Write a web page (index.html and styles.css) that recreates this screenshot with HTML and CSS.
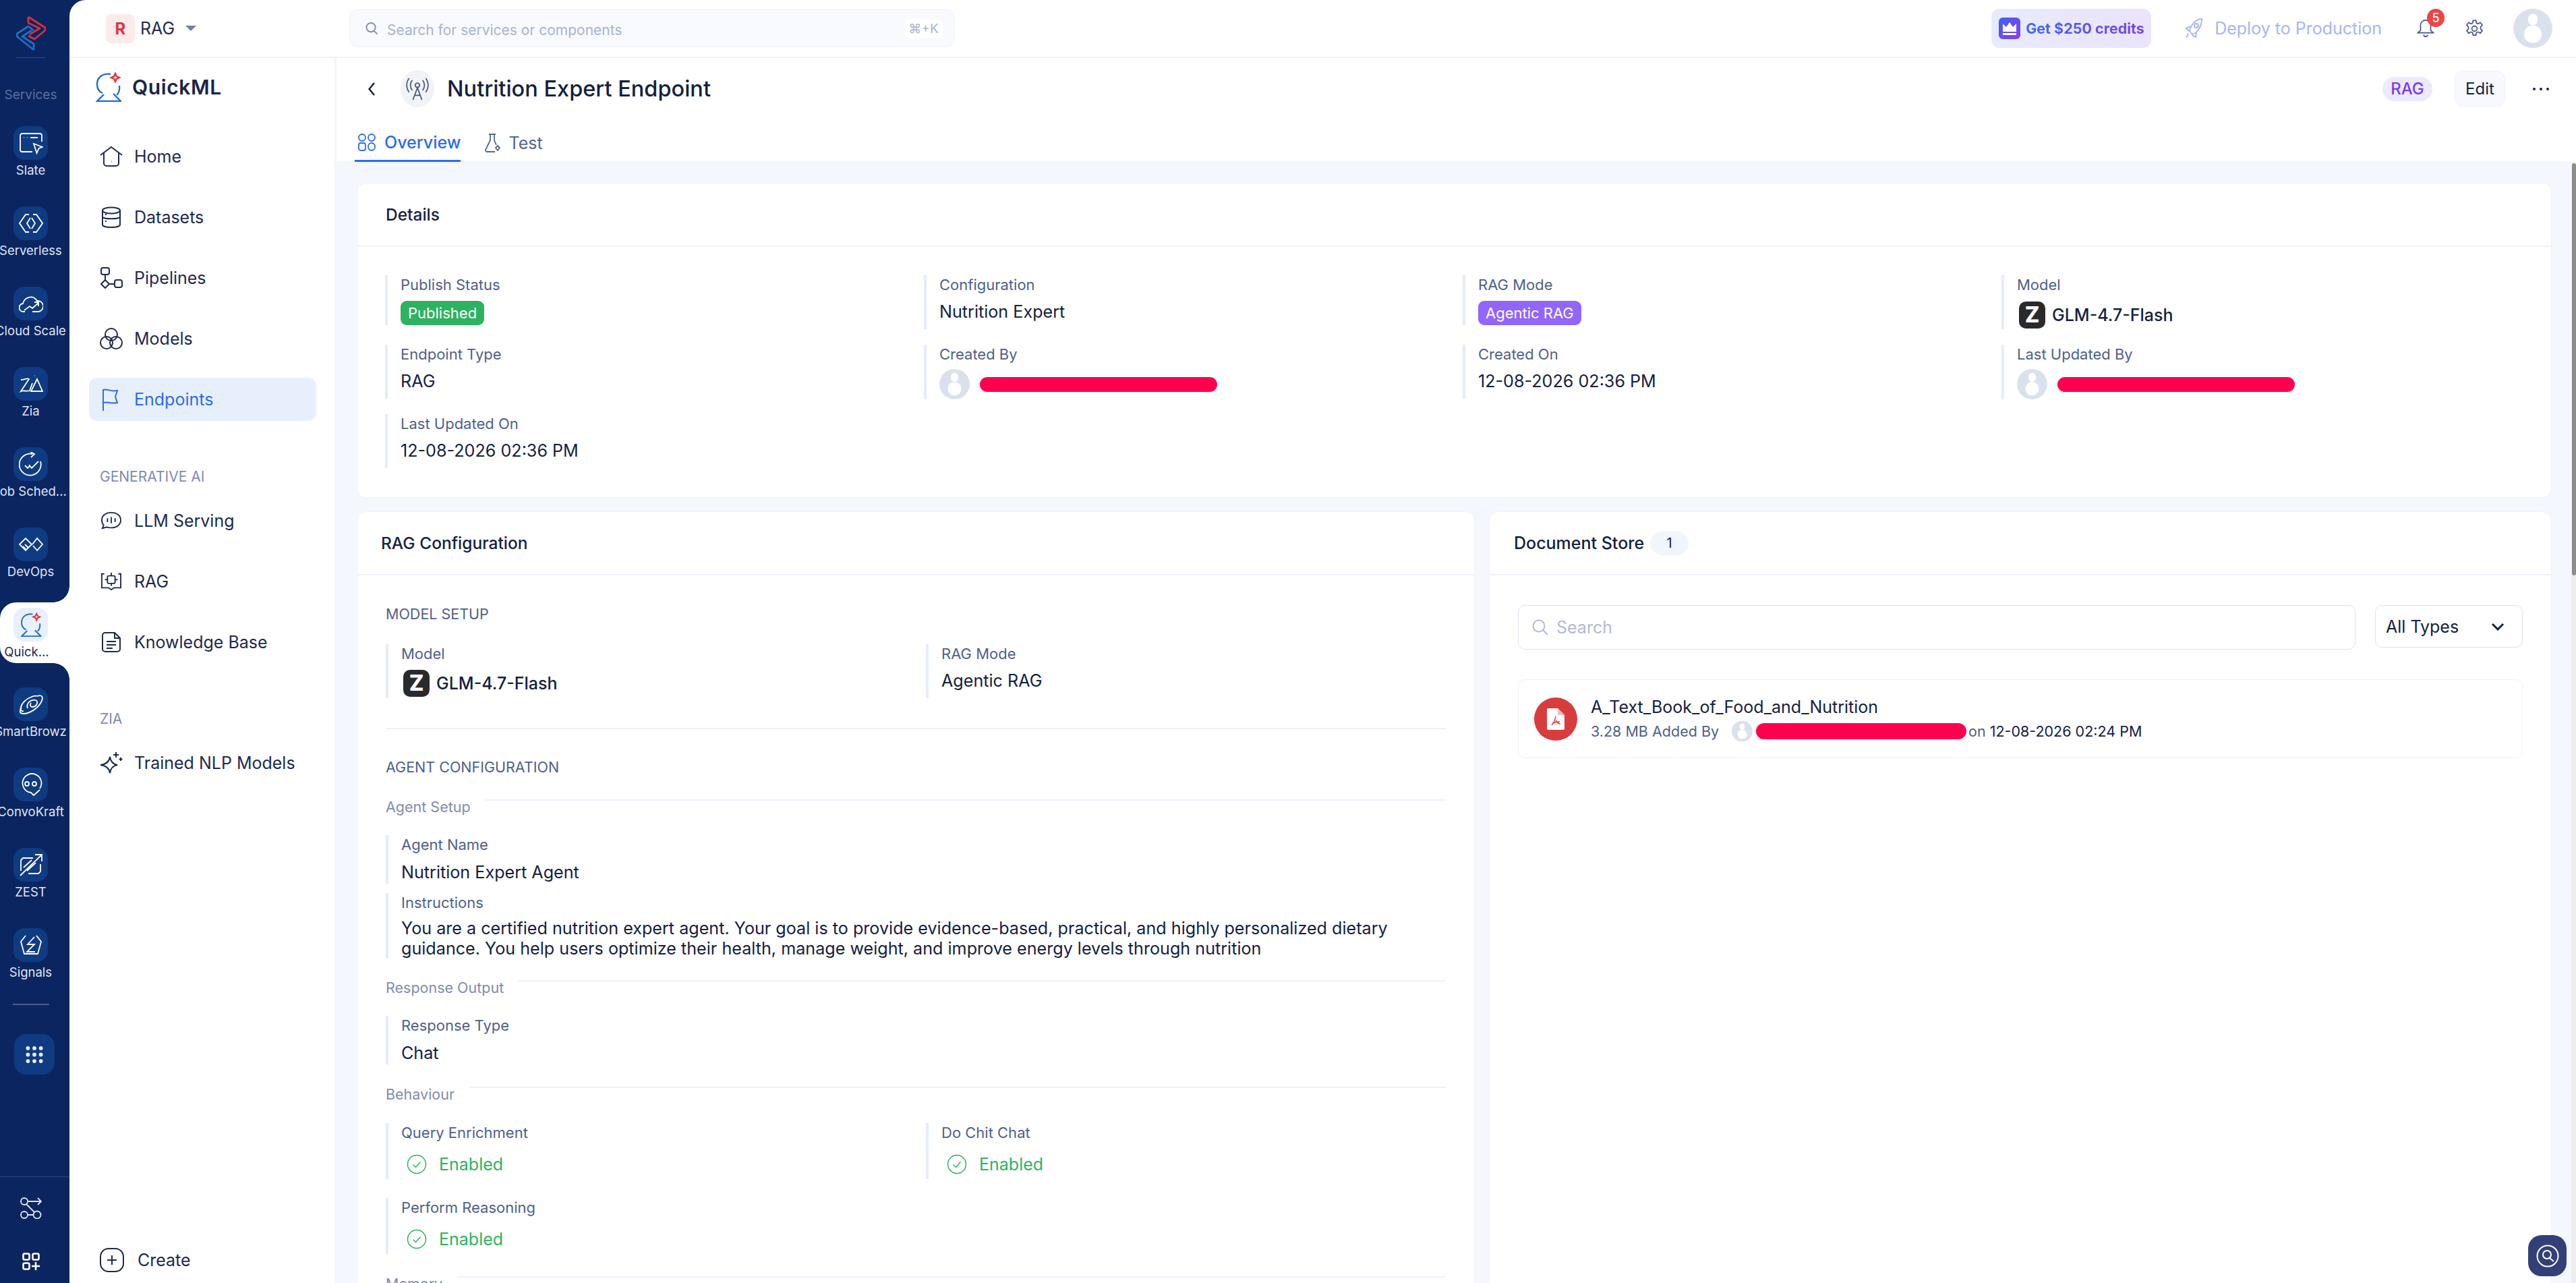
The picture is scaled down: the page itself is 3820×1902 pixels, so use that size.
FILE: index.html
```html
<!DOCTYPE html>
<html lang="en">
<head>
  <meta charset="UTF-8" />
  <title>Nutrition Expert Endpoint - QuickML</title>
  <link rel="stylesheet" href="styles.css">
</head>
<body>
<div class="app">

  <!-- Rail de serviços -->
  <nav class="rail">
    <div class="rail-logo">
      <svg viewBox="0 0 44 52" width="44" height="52" fill="none" stroke-width="2.800" stroke-linejoin="round">
        <path d="M18 2l25 16v4L27 35l-9-5M18 2v9l17 8-15 9" stroke="#d7303a"/>
        <path d="M26 51L1 31v-4l17-11 8 6M26 51v-9L9 31l14-9" stroke="#1f6fc4"/>
      </svg>
    </div>
    <div class="rail-title">Services</div>

    <a class="rail-item">
      <span class="tile"><svg viewBox="0 0 36 36"><path d="M34 16V7a3 3 0 0 0-3-3H5a3 3 0 0 0-3 3v21a3 3 0 0 0 3 3h15"/><path d="M7 10h.5M12 10h.5M17 10h11"/><path d="M22 19l13 5-5.500 2-3 7z"/></svg></span>
      <span class="rail-label">Slate</span>
    </a>
    <a class="rail-item">
      <span class="tile"><svg viewBox="0 0 36 36"><path d="M15 5h-5L1 18l9 13h5M17 10l-5 8 5 8"/><path d="M21 5h5l9 13-9 13h-5M19 10l5 8-5 8"/></svg></span>
      <span class="rail-label">Serverless</span>
    </a>
    <a class="rail-item">
      <span class="tile"><svg viewBox="0 0 36 36"><path d="M9 30H7a6 6 0 0 1-1-12C8 9 20 4 27 14a8 8 0 0 1 2 16H20"/><path d="M8 28l8-6 4 3 9-8M23 16h6v6"/></svg></span>
      <span class="rail-label">Cloud Scale</span>
    </a>
    <a class="rail-item">
      <span class="tile"><svg viewBox="0 0 36 36"><path d="M3 12c5 0 9-3 12-1L3 29c4-2 8 1 13-1l4-11"/><path d="M27 11L18 29h17z"/><path d="M23 6h.5"/></svg></span>
      <span class="rail-label">Zia</span>
    </a>
    <a class="rail-item">
      <span class="tile"><svg viewBox="0 0 36 36"><path d="M32 14A16 16 0 1 1 20 3"/><path d="M17 0l6 3-5 5"/><path d="M9 20l4 4 3-3M15 19l4 5 10-10"/></svg></span>
      <span class="rail-label rail-clip">Job Sched...</span>
    </a>
    <a class="rail-item">
      <span class="tile"><svg viewBox="0 0 36 36"><path d="M1 18l9-9 9 9-9 9zM20 18l7-9 8 9-8 9-6-7"/><path d="M6 21l5 5M9 18l5 5"/></svg></span>
      <span class="rail-label">DevOps</span>
    </a>
    <a class="rail-item active">
      <span class="tile"><svg viewBox="0 0 38 44" fill="none"><use href="#logo-ml"/></svg></span>
      <span class="rail-label">Quick...</span>
    </a>
    <a class="rail-item">
      <span class="tile"><svg viewBox="0 0 36 36"><path d="M27 6c9-3 9 3 6 9-5 9-17 17-26 17-7 0-6-5-3-9"/><path d="M7 28C0 30 2 20 8 14 15 7 24 5 27 6"/><path d="M13 24c-3-7 5-14 12-12 5 2 1 10-5 10-3 0-4-3-2-6"/></svg></span>
      <span class="rail-label">SmartBrowz</span>
    </a>
    <a class="rail-item">
      <span class="tile"><svg viewBox="0 0 36 36"><path d="M31 24A14 14 0 1 0 18 30l4 4 9-8"/><circle cx="12" cy="17" r="3"/><circle cx="23" cy="17" r="3"/></svg></span>
      <span class="rail-label">ConvoKraft</span>
    </a>
    <a class="rail-item">
      <span class="tile"><svg viewBox="0 0 36 36"><path d="M3 27V11l3-3h15M32 17v11l-3 3H14"/><path d="M2 34L34 3M24 3h10v10M7 22L19 11M12 27L25 15"/></svg></span>
      <span class="rail-label">ZEST</span>
    </a>
    <a class="rail-item">
      <span class="tile"><svg viewBox="0 0 36 36"><path d="M10 4L3 13l5 18h20l5-18-7-9"/><path d="M23 6L13 17h10L12 28h12"/></svg></span>
      <span class="rail-label">Signals</span>
    </a>

    <div class="rail-line"></div>
    <button class="rail-grid">
      <svg viewBox="0 0 26 26" width="26" height="25" fill="#e8eefb">
        <circle cx="3" cy="3" r="3"/><circle cx="13" cy="3" r="3"/><circle cx="23" cy="3" r="3"/>
        <circle cx="3" cy="13" r="3"/><circle cx="13" cy="13" r="3"/><circle cx="23" cy="13" r="3"/>
        <circle cx="3" cy="23" r="3"/><circle cx="13" cy="23" r="3"/><circle cx="23" cy="23" r="3"/>
      </svg>
    </button>

    <div class="rail-foot">
      <svg viewBox="0 0 32 32" width="32" height="32" fill="none" stroke="#dfe6f5" stroke-width="1.800">
        <circle cx="6" cy="6" r="5"/><circle cx="6" cy="26" r="5"/><circle cx="25" cy="26" r="5.500"/>
        <path d="M11 6h20M26 1l5 5-5 5M9 10l12 12M11 26h9"/>
      </svg>
      <svg viewBox="0 0 26 26" width="26" height="26" fill="none" stroke="#fff" stroke-width="2.600">
        <rect x="1.500" y="1.500" width="9" height="9" rx="2"/><rect x="15.500" y="1.500" width="9" height="9" rx="2"/>
        <rect x="1.500" y="15.500" width="9" height="9" rx="2"/><path d="M20 14v12M14 20h12"/>
      </svg>
    </div>
  </nav>

  <div class="main">

    <!-- Barra superior -->
    <header class="topbar">
      <div class="project">
        <span class="project-tile">R</span>
        <span class="project-name">RAG</span>
        <span class="caret"></span>
      </div>
      <div class="global-search">
        <svg viewBox="0 0 20 20" width="19" height="20" fill="none" stroke="#7f8cab" stroke-width="2"><circle cx="8.500" cy="8.500" r="7"/><path d="M13.500 14l5 5"/></svg>
        <span>Search for services or components</span>
        <kbd>⌘+K</kbd>
      </div>
      <div class="top-actions">
        <a class="credits">
          <span class="crown"><svg viewBox="0 0 24 24" width="24" height="24" fill="#fff"><path d="M2 5l5 5 5-7 5 7 5-5v12H2zM2 19h20v3H2z"/></svg></span>
          <span class="credits-text">Get $250 credits</span>
        </a>
        <a class="deploy">
          <svg viewBox="0 0 28 32" width="28" height="32" fill="none" stroke="#a9b6f2" stroke-width="2"><path d="M26 2C17 3 10 10 8 20l4 5C21 22 26 12 26 2z"/><circle cx="18" cy="12" r="3"/><path d="M9 13l-6 3 4 4M18 22l-1 7-5-3M6 24l-3 6"/></svg>
          <span>Deploy to Production</span>
        </a>
        <span class="bell">
          <svg viewBox="0 0 26 32" width="26" height="30" fill="none" stroke="#43557f" stroke-width="1.800"><path d="M13 3a8 8 0 0 0-8 8v8l-4 4h24l-4-4v-8a8 8 0 0 0-8-8zM10 26a3 3 0 0 0 6 0"/></svg>
          <b class="badge">5</b>
        </span>
        <svg class="gear" viewBox="0 0 24 24" width="29" height="29" fill="none" stroke="#43557f" stroke-width="1.400"><circle cx="12" cy="12" r="3.200"/><path d="M10.300 2h3.400l.6 3 2.200 1 2.600-1.600 2.400 3-2 2.300v2.600l2 2.300-2.400 3-2.600-1.600-2.200 1-.6 3h-3.400l-.6-3-2.200-1-2.600 1.600-2.400-3 2-2.300v-2.600l-2-2.300 2.400-3 2.600 1.600 2.200-1z"/></svg>
        <svg class="avatar avatar-top" viewBox="0 0 40 40"><use href="#avatar"/></svg>
      </div>
    </header>

    <div class="below">

      <!-- Menu lateral -->
      <aside class="side">
        <div class="side-brand">
          <svg viewBox="0 0 38 44" width="38" height="44" fill="none"><use href="#logo-ml"/></svg>
          <span>QuickML</span>
        </div>
        <a class="nav-item">
          <svg viewBox="0 0 34 32" width="34" height="32"><path d="M1 14L17 2l16 12M6 11v15a4 4 0 0 0 4 4h14a4 4 0 0 0 4-4V11"/><path d="M17 24h.4"/></svg>Home
        </a>
        <a class="nav-item">
          <svg viewBox="0 0 34 32" width="34" height="32"><ellipse cx="17" cy="6" rx="13" ry="4.500"/><path d="M4 6v21c0 2 4 4 13 4s13-2 13-4V6M4 16c3 3 23 3 26 0M8 22h2M8 12h2"/></svg>Datasets
        </a>
        <a class="nav-item">
          <svg viewBox="0 0 34 32" width="34" height="32"><rect x="2" y="1" width="12" height="10" rx="3"/><rect x="22" y="19" width="11" height="11" rx="3"/><path d="M8 11v8M2 25l6-6 6 6-6 6zM14 25h8"/></svg>Pipelines
        </a>
        <a class="nav-item">
          <svg viewBox="0 0 34 32" width="34" height="32"><circle cx="17" cy="10" r="9"/><circle cx="10" cy="22" r="9"/><circle cx="24" cy="22" r="9"/></svg>Models
        </a>
        <a class="nav-item current">
          <svg viewBox="0 0 34 34" width="34" height="34"><path d="M5 2v32M5 3c8-2 9 3 21 1l-3 9 3 9c-10 2-13-2-21 0"/></svg>Endpoints
        </a>

        <div class="nav-group">GENERATIVE AI</div>
        <a class="nav-item">
          <svg viewBox="0 0 34 32" width="34" height="30"><path d="M17 3C8 3 2 8 2 15c0 3 1 6 3 8l-2 5 7-2c2 1 5 1 7 1 9 0 15-5 15-12S26 3 17 3z"/><path d="M11 12v6M17 10v10M23 12v6"/></svg>LLM Serving
        </a>
        <a class="nav-item">
          <svg viewBox="0 0 34 32" width="34" height="30"><path d="M6 4H2v22h11l4 3 4-3h11V4h-4"/><rect x="11" y="7" width="12" height="12" rx="2"/><path d="M17 2v5M17 19v4M7 13h4M23 13h4"/></svg>RAG
        </a>
        <a class="nav-item">
          <svg viewBox="0 0 34 32" width="34" height="32"><path d="M8 2h14l8 8v16a4 4 0 0 1-4 4H8a4 4 0 0 1-4-4V6a4 4 0 0 1 4-4zM22 2v8h8M10 15h14M10 20h14M10 25h9"/></svg>Knowledge Base
        </a>

        <div class="nav-group nav-group-zia">ZIA</div>
        <a class="nav-item">
          <svg viewBox="0 0 34 34" width="34" height="34"><path d="M15 8c1 7 5 11 11 12-6 1-10 5-11 12-1-7-5-11-14-12 9-1 13-5 14-12z"/><path d="M24 1v8M20 5h8M31 9v5M28.500 11.500h5"/></svg>Trained NLP Models
        </a>

        <a class="create">
          <svg viewBox="0 0 36 36" width="36" height="36" fill="none" stroke="#1e2a4d" stroke-width="2"><rect x="1" y="1" width="34" height="34" rx="12"/><path d="M18 11v14M11 18h14"/></svg>
          Create
        </a>
      </aside>

      <main class="content">
        <div class="content-head">
          <div class="title-row">
            <svg class="back" viewBox="0 0 10 20" width="10" height="20" fill="none" stroke="#0f1c3a" stroke-width="2.400"><path d="M9 1L1.500 10 9 19"/></svg>
            <span class="title-icon">
              <svg viewBox="0 0 34 36" width="34" height="34" fill="none" stroke="#43557f" stroke-width="1.800"><circle cx="17" cy="12" r="3.500"/><path d="M17 16L10 35M17 16l7 19M12 28h10M9 4a12 12 0 0 0 0 16M25 4a12 12 0 0 1 0 16M4 1a18 18 0 0 0 0 22M30 1a18 18 0 0 1 0 22"/></svg>
            </span>
            <h1>Nutrition Expert Endpoint</h1>
            <div class="title-actions">
              <span class="tag-rag">RAG</span>
              <button class="btn-edit">Edit</button>
              <span class="more"><i></i><i></i><i></i></span>
            </div>
          </div>
          <div class="tabs">
            <a class="tab tab-on">
              <svg viewBox="0 0 26 26" width="26" height="26" fill="none" stroke="#2a6cf0" stroke-width="1.800"><rect x="1" y="1" width="10" height="10" rx="5"/><rect x="15" y="1" width="10" height="10" rx="5"/><rect x="1" y="14" width="10" height="11" rx="3"/><rect x="15" y="14" width="10" height="11" rx="5"/></svg>
              Overview
            </a>
            <a class="tab">
              <svg viewBox="0 0 24 28" width="24" height="28" fill="none" stroke="#55668f" stroke-width="1.800"><path d="M7 1h10M9 1v9L2 24a2.500 2.500 0 0 0 2 3h12M15 1v9l3 7M20 18l3 3-3 4-3-4z"/></svg>
              Test
            </a>
          </div>
        </div>

        <div class="content-body">
          <div class="scroll-area">

            <section class="card details">
              <div class="card-head">Details</div>
              <div class="details-grid">
                <div class="field">
                  <div class="field-label">Publish Status</div>
                  <span class="pill pill-green">Published</span>
                </div>
                <div class="field">
                  <div class="field-label">Configuration</div>
                  <div class="field-value">Nutrition Expert</div>
                </div>
                <div class="field">
                  <div class="field-label">RAG Mode</div>
                  <span class="pill pill-purple">Agentic RAG</span>
                </div>
                <div class="field">
                  <div class="field-label">Model</div>
                  <div class="model-value"><span class="z-logo">Z</span>GLM-4.7-Flash</div>
                </div>
                <div class="field">
                  <div class="field-label">Endpoint Type</div>
                  <div class="field-value">RAG</div>
                </div>
                <div class="field">
                  <div class="field-label">Created By</div>
                  <div class="user-value"><svg class="avatar" viewBox="0 0 40 40"><use href="#avatar"/></svg><span class="redact"></span></div>
                </div>
                <div class="field">
                  <div class="field-label">Created On</div>
                  <div class="field-value">12-08-2026 02:36 PM</div>
                </div>
                <div class="field">
                  <div class="field-label">Last Updated By</div>
                  <div class="user-value"><svg class="avatar" viewBox="0 0 40 40"><use href="#avatar"/></svg><span class="redact"></span></div>
                </div>
                <div class="field">
                  <div class="field-label">Last Updated On</div>
                  <div class="field-value">12-08-2026 02:36 PM</div>
                </div>
              </div>
            </section>

            <div class="columns">
              <section class="card">
                <div class="card-head card-head-rag">RAG Configuration</div>
                <div class="rag-body">
                  <div class="section-title">MODEL SETUP</div>
                  <div class="two-col model-setup">
                    <div class="field">
                      <div class="field-label">Model</div>
                      <div class="model-value model-strong"><span class="z-logo">Z</span>GLM-4.7-Flash</div>
                    </div>
                    <div class="field">
                      <div class="field-label">RAG Mode</div>
                      <div class="field-value">Agentic RAG</div>
                    </div>
                  </div>
                  <hr class="rule">
                  <div class="section-title">AGENT CONFIGURATION</div>

                  <div class="sub-head"><span>Agent Setup</span></div>
                  <div class="field field-tight">
                    <div class="field-label">Agent Name</div>
                    <div class="field-value">Nutrition Expert Agent</div>
                  </div>
                  <div class="field field-tight field-instructions">
                    <div class="field-label">Instructions</div>
                    <div class="field-value">You are a certified nutrition expert agent. Your goal is to provide evidence-based, practical, and highly personalized dietary guidance. You help users optimize their health, manage weight, and improve energy levels through nutrition</div>
                  </div>

                  <div class="sub-head sub-head-next"><span>Response Output</span></div>
                  <div class="field field-tight">
                    <div class="field-label">Response Type</div>
                    <div class="field-value">Chat</div>
                  </div>

                  <div class="sub-head sub-head-next"><span>Behaviour</span></div>
                  <div class="two-col behaviour">
                    <div class="field">
                      <div class="field-label">Query Enrichment</div>
                      <div class="enabled"><svg viewBox="0 0 30 30" width="30" height="30"><use href="#check"/></svg>Enabled</div>
                    </div>
                    <div class="field">
                      <div class="field-label">Do Chit Chat</div>
                      <div class="enabled"><svg viewBox="0 0 30 30" width="30" height="30"><use href="#check"/></svg>Enabled</div>
                    </div>
                    <div class="field">
                      <div class="field-label">Perform Reasoning</div>
                      <div class="enabled"><svg viewBox="0 0 30 30" width="30" height="30"><use href="#check"/></svg>Enabled</div>
                    </div>
                  </div>

                  <div class="sub-head sub-head-next"><span>Memory</span></div>
                </div>
              </section>

              <section class="card">
                <div class="card-head card-head-docs">Document Store <span class="count">1</span></div>
                <div class="docs-body">
                  <div class="doc-tools">
                    <div class="doc-search">
                      <svg viewBox="0 0 24 24" width="24" height="24" fill="none" stroke="#b3bbd2" stroke-width="2"><circle cx="10" cy="10" r="8.500"/><path d="M16 16l7 7"/></svg>
                      <span>Search</span>
                    </div>
                    <div class="doc-select">
                      All Types
                      <svg viewBox="0 0 20 12" width="20" height="12" fill="none" stroke="#14213f" stroke-width="3"><path d="M2 2l8 8 8-8"/></svg>
                    </div>
                  </div>
                  <div class="doc-card">
                    <span class="doc-icon">
                      <svg viewBox="0 0 26 32" width="26" height="32"><path d="M2 0h14l10 10v20a2 2 0 0 1-2 2H2a2 2 0 0 1-2-2V2a2 2 0 0 1 2-2z" fill="#fff"/><path d="M16 0l10 10H16z" fill="#f3b9b9"/><path d="M13 12c-1 6-3 10-6 13M13 18c2 3 4 5 7 5M8 22c3-1 7-2 11-2" fill="none" stroke="#d93c3c" stroke-width="1.500"/></svg>
                    </span>
                    <div>
                      <div class="doc-name">A_Text_Book_of_Food_and_Nutrition</div>
                      <div class="doc-meta">
                        <span>3.28 MB Added By</span>
                        <svg class="avatar avatar-small" viewBox="0 0 40 40"><use href="#avatar"/></svg>
                        <span class="redact redact-doc"></span>
                        <span>on</span>
                        <span class="doc-date">12-08-2026 02:24 PM</span>
                      </div>
                    </div>
                  </div>
                </div>
              </section>
            </div>
          </div>
          <div class="scrollbar"><div class="scroll-thumb"></div></div>
          <button class="float-search">
            <svg viewBox="0 0 34 34" width="34" height="34" fill="none" stroke="#fff" stroke-width="2"><circle cx="17" cy="17" r="15.500"/><circle cx="16" cy="15" r="6"/><path d="M20 20l6 5"/></svg>
          </button>
        </div>
      </main>
    </div>
  </div>
</div>

<!-- Ícones repetidos -->
<svg class="sprite" xmlns="http://www.w3.org/2000/svg">
  <symbol id="logo-ml" viewBox="0 0 38 44">
    <path d="M22 3C10 1 2 8 2 18c0 6 3 11 8 13" fill="none" stroke="#1f6fc4" stroke-width="2.400"/>
    <path d="M35 20c1 7-1 11-4 14" fill="none" stroke="#1f6fc4" stroke-width="2.400"/>
    <path d="M12 33L2 43h35L26 32" fill="none" stroke="#1f6fc4" stroke-width="2.400"/>
    <path d="M29 2l1.800 4.200L35 8l-4.200 1.800L29 14l-1.800-4.200L23 8l4.200-1.800z" fill="none" stroke="#e3303c" stroke-width="2.400"/>
  </symbol>
  <symbol id="avatar" viewBox="0 0 40 40">
    <circle cx="20" cy="20" r="20" fill="#dbe1ec"/>
    <ellipse cx="20" cy="11" rx="5" ry="6" fill="#fff"/>
    <circle cx="20" cy="26" r="9" fill="#fff"/>
  </symbol>
  <symbol id="check" viewBox="0 0 30 30">
    <circle cx="15" cy="15" r="13.500" fill="none" stroke="#2db35f" stroke-width="1.500"/>
    <path d="M9.500 15.500l4 4 7-8" fill="none" stroke="#2db35f" stroke-width="1.500"/>
  </symbol>
</svg>
</body>
</html>
```

FILE: styles.css
```css
:root {
  --rail: #0b2560;
  --rail-tile: #0f3b82;
  --ink: #14213f;
  --ink-nav: #1e2a4d;
  --label: #4f5f8b;
  --muted: #7f8bb0;
  --bar: #e6ebf8;
  --line: #eef1f9;
  --page: #f4f7fe;
  --blue: #2a6cf0;
  --green: #2db35f;
}

* {
  box-sizing: border-box;
}

html, body {
  margin: 0;
  height: 100%;
  overflow: hidden;
}

body {
  font-family: Inter, "Liberation Sans", sans-serif;
  background: var(--rail);
  color: var(--ink);
}

a {
  color: inherit;
  text-decoration: none;
}

.sprite {
  display: none;
}

.app {
  display: flex;
  height: 100vh;
}

/* Rail */
.rail {
  width: 103px;
  flex: none;
  display: flex;
  flex-direction: column;
  overflow: hidden;
  background: var(--rail);
}

.rail-logo {
  flex: none;
  width: 43px;
  height: 86px;
  margin-left: 24px;
  padding-top: 23px;
  border-bottom: 1px solid #33487f;
}
.rail-logo svg {
  display: block;
}

.rail-title {
  flex: none;
  width: 91px;
  margin-top: 41px;
  height: 28px;
  line-height: 28px;
  font-size: 19px;
  text-align: center;
  color: #5d6f9f;
}

.rail-item {
  position: relative;
  flex: none;
  height: 119px;
  width: 103px;
  padding-top: 32px;
  display: flex;
  flex-direction: column;
  align-items: center;
}

.tile {
  display: flex;
  align-items: center;
  justify-content: center;
  width: 51px;
  height: 50px;
  flex: none;
  margin-left: -12px;
  border-radius: 16px;
  background: var(--rail-tile);
}
.tile svg {
  width: 36px;
  height: 36px;
  fill: none;
  stroke: #fff;
  stroke-width: 1.800;
}

.rail-label {
  width: 91px;
  margin-left: -12px;
  margin-top: 5px;
  display: flex;
  justify-content: center;
  white-space: nowrap;
  font-size: 18.500px;
  line-height: 20px;
  color: #dfe6f5;
}
.rail-clip {
  margin-left: -15px;
}

.rail-item.active {
  height: 90px;
  margin-top: 24px;
  margin-bottom: 4px;
  padding-top: 8px;
  background: #fff;
  border-radius: 24px 0 0 24px;
}
.rail-item.active .tile {
  background: #e8f0fe;
}
.rail-item.active .rail-label {
  margin-left: -24px;
  color: #1e2a4d;
}
.rail-item.active::before,
.rail-item.active::after {
  content: "";
  position: absolute;
  right: 0;
  width: 24px;
  height: 24px;
}
.rail-item.active::before {
  top: -24px;
  background: radial-gradient(circle at 0 0, var(--rail) 23.500px, #fff 24px);
}
.rail-item.active::after {
  bottom: -24px;
  background: radial-gradient(circle at 0 100%, var(--rail) 23.500px, #fff 24px);
}

.rail-line {
  flex: none;
  width: 54px;
  height: 2px;
  margin: 25px 0 0 19px;
  background: #4a5d8e;
}

.rail-grid {
  flex: none;
  width: 60px;
  height: 60px;
  margin: 43px 0 0 21px;
  padding: 0;
  border: 0;
  border-radius: 18px;
  background: var(--rail-tile);
  display: flex;
  align-items: center;
  justify-content: center;
}

.rail-foot {
  flex: none;
  margin-top: auto;
  height: 158px;
  border-top: 1px solid #33487f;
  display: flex;
  flex-direction: column;
  align-items: center;
  gap: 50px;
  padding: 30px 12px 0 0;
}

/* Main */
.main {
  flex: 1;
  min-width: 0;
  display: flex;
  flex-direction: column;
  background: #fff;
  border-top-left-radius: 24px;
  overflow: hidden;
}

.topbar {
  flex: none;
  height: 86px;
  display: flex;
  align-items: center;
  padding: 0 35px 0 54px;
  border-bottom: 2px solid var(--line);
}

.project {
  display: flex;
  align-items: center;
  width: 361px;
}
.project-tile {
  width: 43px;
  height: 43px;
  border-radius: 8px;
  background: #fdeaea;
  color: #dc3545;
  font-size: 24px;
  font-weight: 700;
  line-height: 43px;
  text-align: center;
}
.project-name {
  margin-left: 8px;
  font-size: 25px;
  color: var(--ink-nav);
}
.caret {
  margin-left: 16px;
  border-left: 8px solid transparent;
  border-right: 8px solid transparent;
  border-top: 8px solid #747f9f;
}

.global-search {
  width: 898px;
  height: 56px;
  padding: 0 17px 0 23px;
  display: flex;
  align-items: center;
  gap: 13px;
  background: #f8faff;
  border: 1px solid #eef1f9;
  border-radius: 12px;
  font-size: 21px;
  color: #a9b3cc;
}
.global-search span {
  padding-top: 4px;
}
.global-search kbd {
  margin-left: auto;
  width: 57px;
  height: 29px;
  border-radius: 8px;
  background: #fff;
  font: 19px/29px Inter, sans-serif;
  text-align: center;
  color: #a9b3cc;
}

.top-actions {
  margin-left: auto;
  display: flex;
  align-items: center;
}
.credits {
  width: 237px;
  height: 58px;
  padding-left: 11px;
  display: flex;
  align-items: center;
  gap: 8px;
  border-radius: 12px;
  background: linear-gradient(90deg, #e8ebfd, #ebe3fc);
}
.crown {
  width: 32px;
  height: 32px;
  border-radius: 6px;
  background: linear-gradient(135deg, #3d63f5, #8a3cf0);
  display: flex;
  align-items: center;
  justify-content: center;
}
.credits-text {
  font-size: 21.500px;
  font-weight: 700;
  white-space: nowrap;
  background: linear-gradient(90deg, #3f66f5, #7a45ea);
  -webkit-background-clip: text;
  background-clip: text;
  color: transparent;
}
.deploy {
  margin-left: 49px;
  display: flex;
  align-items: center;
  gap: 17px;
  font-size: 25px;
  color: #a8b5f5;
}
.bell {
  position: relative;
  margin-left: 52px;
  display: flex;
}
.badge {
  position: absolute;
  left: 15px;
  top: -14px;
  width: 26px;
  height: 27px;
  border-radius: 50%;
  background: #ef4444;
  color: #fff;
  font-size: 18px;
  font-weight: 500;
  line-height: 27px;
  text-align: center;
}
.gear {
  margin-left: 45px;
}
.avatar.avatar-top {
  width: 58px;
  height: 58px;
  margin-left: 43px;
}

.below {
  flex: 1;
  min-height: 0;
  display: flex;
}

/* Menu lateral */
.side {
  flex: none;
  width: 396px;
  padding: 0 27px 0 29px;
  display: flex;
  flex-direction: column;
  border-right: 3px solid #f3f5fc;
}
.side-brand {
  display: flex;
  align-items: center;
  gap: 16px;
  height: 44px;
  margin: 21px 0 0 10px;
  font-size: 30px;
  font-weight: 600;
  letter-spacing: 0.600px;
  color: #1a2547;
}
.nav-item {
  flex: none;
  height: 64px;
  margin-top: 26px;
  padding-left: 16px;
  display: flex;
  align-items: center;
  gap: 17px;
  border-radius: 12px;
  font-size: 25px;
  color: var(--ink-nav);
}
.side-brand + .nav-item {
  margin-top: 49px;
}
.nav-item svg {
  flex: none;
  fill: none;
  stroke: #1e2a4d;
  stroke-width: 2;
}
.nav-item.current {
  background: #e8effc;
  color: var(--blue);
}
.nav-item.current svg {
  stroke: var(--blue);
}
.nav-group {
  margin: 69px 0 0 16px;
  height: 28px;
  line-height: 28px;
  font-size: 21px;
  color: var(--muted);
}
.nav-group + .nav-item {
  margin-top: 19px;
}
.nav-group-zia {
  margin-top: 68px;
}
.create {
  margin: auto 0 16px 16px;
  display: flex;
  align-items: center;
  gap: 20px;
  font-size: 25px;
  color: var(--ink-nav);
}

/* Conteúdo */
.content {
  flex: 1;
  min-width: 0;
  display: flex;
  flex-direction: column;
}
.content-head {
  flex: none;
  height: 156px;
  border-bottom: 2px solid var(--line);
}
.title-row {
  height: 91px;
  padding: 0 40px 0 47px;
  display: flex;
  align-items: center;
}
.back {
  flex: none;
}
.title-icon {
  width: 50px;
  height: 55px;
  margin-left: 38px;
  border-radius: 50%;
  background: #f1f3f9;
  display: flex;
  align-items: center;
  justify-content: center;
}
h1 {
  margin: 0 0 0 19px;
  font-size: 32.500px;
  line-height: 40px;
  font-weight: 500;
  color: var(--ink);
}
.title-actions {
  margin-left: auto;
  display: flex;
  align-items: center;
}
.tag-rag {
  width: 74px;
  height: 36px;
  border-radius: 18px;
  background: #ede9fe;
  color: #7c3aed;
  font-size: 24px;
  font-weight: 500;
  line-height: 36px;
  text-align: center;
}
.btn-edit {
  width: 75px;
  height: 53px;
  margin-left: 33px;
  border: 1px solid #f0f2fa;
  border-radius: 12px;
  background: #f7f9fe;
  font: 24px Inter, sans-serif;
  color: var(--ink);
}
.more {
  margin-left: 41px;
  display: flex;
  gap: 6px;
}
.more i {
  width: 4px;
  height: 4px;
  border-radius: 50%;
  background: var(--ink);
}

.tabs {
  display: flex;
  height: 63px;
  padding-left: 27px;
  gap: 35px;
}
.tab {
  height: 63px;
  padding: 6px 0 0 5px;
  display: flex;
  align-items: center;
  gap: 13px;
  font-size: 25px;
  font-weight: 500;
  color: #55668f;
}
.tab:last-child {
  gap: 12px;
  padding-left: 0;
  font-weight: 400;
}
.tab-on {
  color: var(--blue);
  border-bottom: 3px solid var(--blue);
  padding-top: 8px;
}

.content-body {
  position: relative;
  flex: 1;
  min-height: 0;
  display: flex;
  background: var(--page);
}
.scroll-area {
  flex: 1;
  min-width: 0;
  height: 100%;
  overflow: hidden;
  padding: 29px 29px 0 30px;
}
.scrollbar {
  flex: none;
  width: 7px;
  background: #eeeeee;
}
.scroll-thumb {
  width: 6px;
  height: 611px;
  margin-left: 1px;
  border-radius: 4px;
  background: #8c8c8c;
}
.float-search {
  position: absolute;
  right: 14px;
  bottom: 10px;
  width: 57px;
  height: 61px;
  padding: 0;
  border: 0;
  border-radius: 20px;
  background: #334078;
  display: flex;
  align-items: center;
  justify-content: center;
}

/* Cartões */
.card {
  background: #fff;
  border: 1px solid #f0f2fa;
  border-radius: 14px;
}
.card-head {
  height: 94px;
  padding-left: 42px;
  display: flex;
  align-items: center;
  font-size: 24.500px;
  font-weight: 500;
  color: var(--ink);
  border-bottom: 2px solid var(--line);
}
.details {
  height: 467px;
}
.details-grid {
  padding: 42px 0 0 41px;
  display: grid;
  grid-template-columns: repeat(4, 799px);
  grid-auto-rows: 81px;
  row-gap: 22px;
  align-items: start;
}

.field {
  border-left: 4px solid var(--bar);
  padding-left: 19px;
}
.field-label {
  font-size: 22px;
  line-height: 28px;
  margin-bottom: 10px;
  color: var(--label);
}
.field-value {
  font-size: 25.150px;
  line-height: 30px;
  padding: 1px 0 11px;
  color: var(--ink);
}

.pill {
  display: inline-block;
  height: 36px;
  padding: 0 11px;
  border-radius: 9px;
  font-size: 22px;
  line-height: 36px;
  color: #fff;
  vertical-align: top;
}
.pill-green {
  background: var(--green);
}
.pill-purple {
  background: #9166fb;
}

.model-value {
  display: flex;
  align-items: center;
  gap: 10px;
  height: 42px;
  font-size: 25px;
  font-weight: 500;
  color: var(--ink);
}
.z-logo {
  flex: none;
  width: 39px;
  height: 40px;
  margin-left: 3px;
  border-radius: 10px;
  background: #2a2a2c;
  color: #fff;
  font-size: 32px;
  font-weight: 800;
  line-height: 40px;
  text-align: center;
}
.user-value {
  display: flex;
  align-items: center;
  gap: 15px;
  margin-top: -2px;
}
.avatar {
  flex: none;
  width: 45px;
  height: 45px;
}
.redact {
  width: 352px;
  height: 22px;
  border-radius: 11px;
  background: #ff0050;
}

.columns {
  margin-top: 20px;
  display: grid;
  grid-template-columns: 1658px 1fr;
  column-gap: 21px;
}
.card-head-rag {
  padding-left: 35px;
}
.card-head-docs {
  padding-left: 36px;
  gap: 9px;
  font-size: 25px;
}
.count {
  width: 57px;
  height: 35px;
  border-radius: 18px;
  background: #f1f5fd;
  font-size: 20px;
  font-weight: 400;
  line-height: 35px;
  text-align: center;
}

.rag-body {
  padding: 43px 42px 120px 42px;
}
.section-title {
  font-size: 21.500px;
  line-height: 28px;
  color: var(--label);
}
.two-col {
  display: grid;
  grid-template-columns: 801px 1fr;
}
.model-setup {
  margin-top: 31px;
}
.model-strong {
  height: 40px;
}
.rule {
  margin: 44px 0 42px;
  border: 0;
  height: 2px;
  background: var(--line);
}
.sub-head {
  display: flex;
  gap: 22px;
  height: 28px;
  margin-top: 31px;
  font-size: 21.500px;
  line-height: 28px;
  color: var(--muted);
}
.sub-head::after {
  content: "";
  flex: 1;
  height: 2px;
  margin-top: 3px;
  background: var(--line);
}
.sub-head-next {
  margin-top: 30px;
}
.field-tight {
  margin-top: 14px;
}
.sub-head + .field-tight {
  margin-top: 28px;
}
.field-tight .field-label {
  margin-bottom: 12px;
}
.field-tight .field-value {
  padding: 0 0 2px;
}
.field-instructions {
  margin-bottom: -1px;
}
.field-instructions .field-label {
  margin-bottom: 9px;
}
.field-instructions .field-value {
  padding-bottom: 0;
}

.behaviour {
  margin-top: 29px;
  row-gap: 28px;
}
.enabled {
  display: flex;
  align-items: center;
  gap: 18px;
  padding: 8px 0 7px 8px;
  font-size: 25px;
  color: var(--green);
}

/* Document Store */
.docs-body {
  padding: 44px 42px 0 42px;
}
.doc-tools {
  display: flex;
  gap: 29px;
  align-items: flex-start;
}
.doc-search {
  flex: 1;
  height: 66px;
  padding-left: 20px;
  display: flex;
  align-items: center;
  gap: 12px;
  border: 1px solid #dde2f0;
  border-radius: 10px;
  font-size: 25px;
  color: #b3bbd2;
}
.doc-select {
  flex: none;
  width: 219px;
  height: 63px;
  padding: 0 26px 0 15px;
  display: flex;
  align-items: center;
  justify-content: space-between;
  border: 1px solid #dde2f0;
  border-radius: 10px;
  font-size: 25px;
  color: var(--ink);
}
.doc-card {
  margin-top: 44px;
  height: 117px;
  padding-left: 23px;
  display: flex;
  align-items: center;
  gap: 20px;
  border: 1px solid #f0f2fa;
  border-radius: 10px;
}
.doc-icon {
  flex: none;
  width: 64px;
  height: 64px;
  border-radius: 50%;
  background: #d93c3c;
  display: flex;
  align-items: center;
  justify-content: center;
}
.doc-name {
  font-size: 25px;
  line-height: 32px;
  color: var(--ink);
}
.doc-meta {
  margin-top: 4px;
  display: flex;
  align-items: center;
  gap: 3px;
  font-size: 21.500px;
  color: var(--label);
}
.avatar-small {
  width: 31px;
  height: 32px;
  margin: 0 2px 0 16px;
}
.redact-doc {
  width: 312px;
  height: 24px;
  border-radius: 12px;
}
.doc-date {
  margin-left: 3px;
  color: var(--ink);
}
```
